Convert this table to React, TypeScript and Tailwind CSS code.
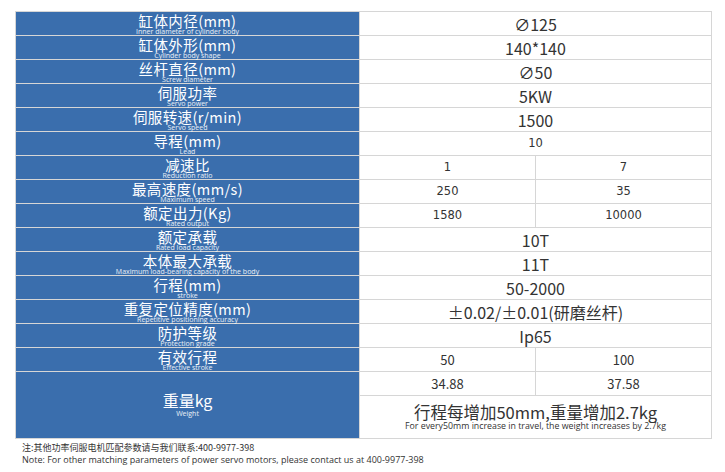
import React from "react";

const cjk = "font-['Noto_Sans_CJK_SC',sans-serif]";

interface Spec {
  zh: string;
  en: string;
  values: string[];
  small?: boolean;
}

const specs: Spec[] = [
  { zh: "缸体内径(mm)", en: "Inner diameter of cylinder body", values: ["∅125"] },
  { zh: "缸体外形(mm)", en: "Cylinder body shape", values: ["140*140"] },
  { zh: "丝杆直径(mm)", en: "Screw diameter", values: ["∅50"] },
  { zh: "伺服功率", en: "Servo power", values: ["5KW"] },
  { zh: "伺服转速(r/min)", en: "Servo speed", values: ["1500"] },
  { zh: "导程(mm)", en: "Lead", values: ["10"], small: true },
  { zh: "减速比", en: "Reduction ratio", values: ["1", "7"], small: true },
  { zh: "最高速度(mm/s)", en: "Maximum speed", values: ["250", "35"], small: true },
  { zh: "额定出力(Kg)", en: "Rated output", values: ["1580", "10000"], small: true },
  { zh: "额定承载", en: "Rated load capacity", values: ["10T"] },
  { zh: "本体最大承载", en: "Maximum load-bearing capacity of the body", values: ["11T"] },
  { zh: "行程(mm)", en: "stroke", values: ["50-2000"] },
  { zh: "重复定位精度(mm)", en: "Repetitive positioning accuracy", values: ["±0.02/±0.01(研磨丝杆)"] },
  { zh: "防护等级", en: "Protection grade", values: ["Ip65"] },
];

function Label({ zh, en }: { zh: string; en: string }) {
  return (
    <div className="bg-[#3a6ead] flex flex-col items-center justify-center text-white">
      <span className={`${cjk} text-[14.5px] leading-[15px] tracking-[0.4px]`}>{zh}</span>
      <span className="font-['Open_Sans',sans-serif] text-[7px] leading-[7px] text-white/90">{en}</span>
    </div>
  );
}

function Value({ text, small, span }: { text: string; small?: boolean; span?: boolean }) {
  return (
    <div
      className={`bg-white flex items-center justify-center text-[#333] ${span ? "col-span-2" : ""} ${
        small
          ? "font-['DejaVu_Sans',sans-serif] text-[11.5px]"
          : `${cjk} text-[16px]`
      }`}
    >
      {text}
    </div>
  );
}

export default function App() {
  return (
    <div className="w-[725px] h-[472px] bg-white pt-[11px] pl-[15px]">
      <div className="w-[697px] grid grid-cols-[343px_175px_175px] grid-rows-[repeat(15,23px)_23px_42px] gap-px p-px bg-[#d6d6d6]">
        {specs.map((s) => (
          <React.Fragment key={s.zh}>
            <Label zh={s.zh} en={s.en} />
            {s.values.length === 1 ? (
              <Value text={s.values[0]} small={s.small} span />
            ) : (
              s.values.map((v) => <Value key={v} text={v} small={s.small} />)
            )}
          </React.Fragment>
        ))}

        <Label zh="有效行程" en="Effective stroke" />
        <div className={`bg-white flex items-center justify-center text-[#333] ${cjk} text-[13px]`}>50</div>
        <div className={`bg-white flex items-center justify-center text-[#333] ${cjk} text-[13px]`}>100</div>

        <div className="row-span-2 bg-[#3a6ead] flex flex-col items-center justify-center text-white">
          <span className={`${cjk} text-[16px] leading-[17px]`}>重量kg</span>
          <span className="font-['Open_Sans',sans-serif] text-[7px] leading-[9px] text-white/90">Weight</span>
        </div>
        <div className={`bg-white flex items-center justify-center text-[#333] ${cjk} text-[13px]`}>34.88</div>
        <div className={`bg-white flex items-center justify-center text-[#333] ${cjk} text-[13px]`}>37.58</div>
        <div className="col-span-2 bg-white flex flex-col items-center justify-center text-[#333]">
          <span className={`${cjk} text-[16.5px] leading-[18px]`}>行程每增加50mm,重量增加2.7kg</span>
          <span className="font-['Open_Sans',sans-serif] text-[8.8px] leading-[11px]">
            For every50mm increase in travel, the weight increases by 2.7kg
          </span>
        </div>
      </div>

      <div className="mt-[3px] pl-[7px] text-[#333] text-[9px] leading-[12px]">
        <p className={cjk}>注:其他功率伺服电机匹配参数请与我们联系:400-9977-398</p>
        <p className="font-['Open_Sans',sans-serif]">
          Note: For other matching parameters of power servo motors, please contact us at 400-9977-398
        </p>
      </div>
    </div>
  );
}
